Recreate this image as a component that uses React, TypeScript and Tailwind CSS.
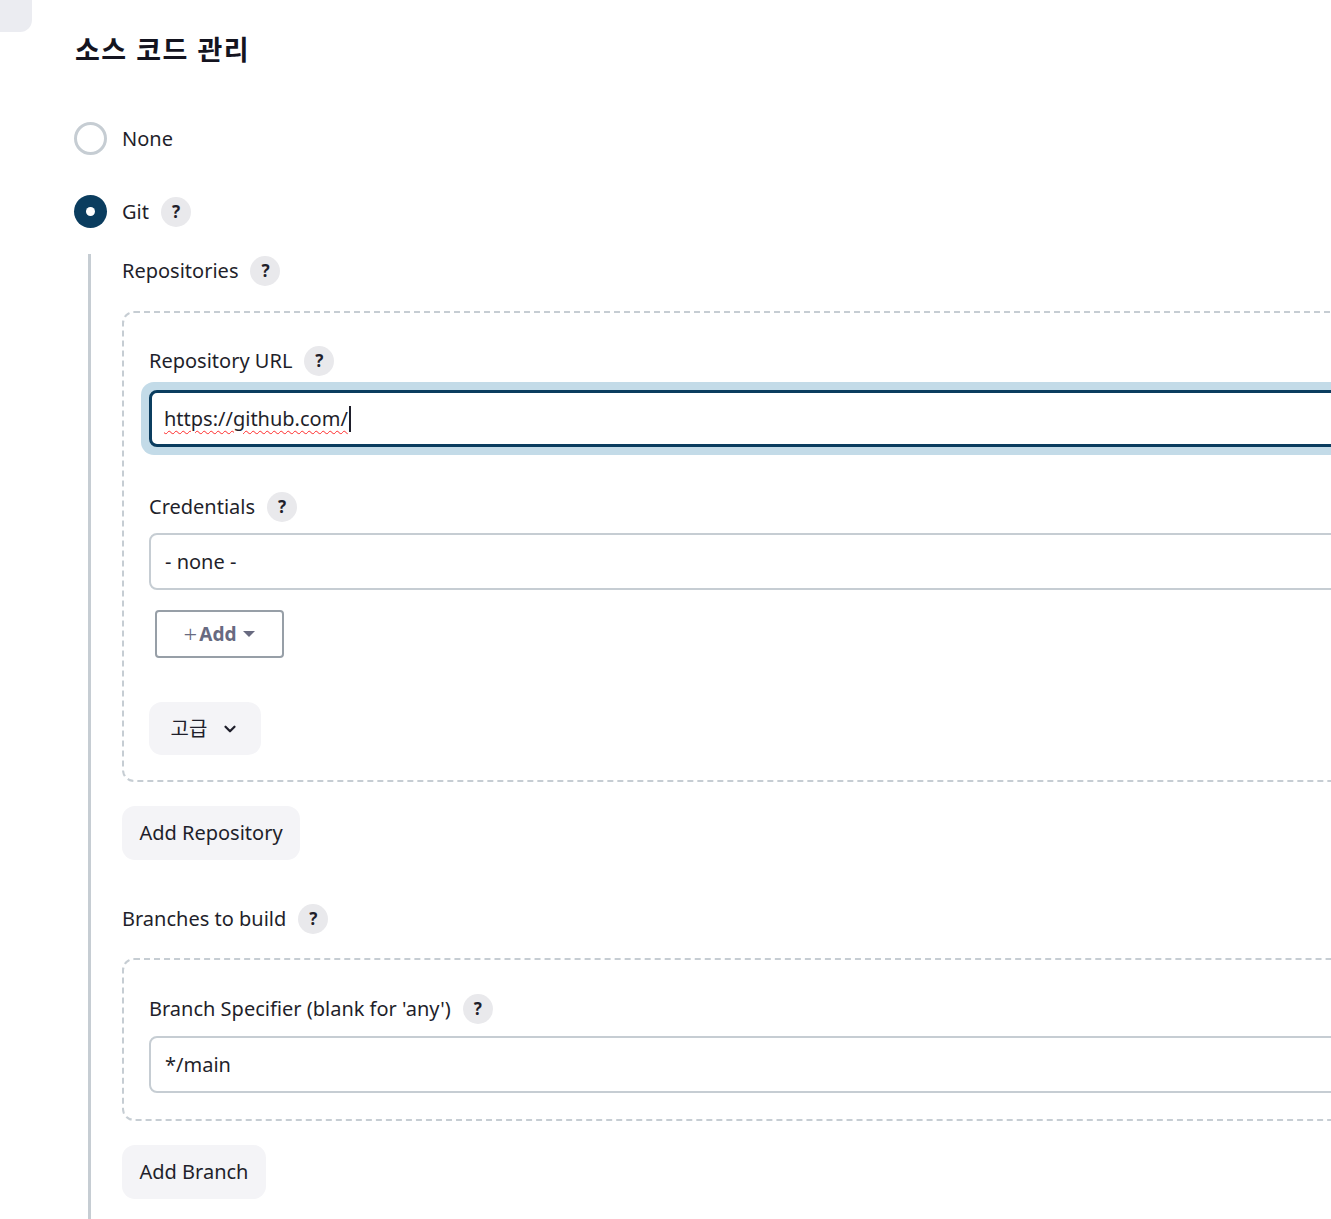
import React from "react";

const font = { fontFamily: '"Noto Sans", "Noto Sans CJK KR", sans-serif' };

function Help() {
  return (
    <span className="ml-3 inline-flex h-[30px] w-[30px] items-center justify-center rounded-full bg-[#e9e9ec] text-[17px] font-bold text-[#1f1f2b]">
      ?
    </span>
  );
}

function Label({ children, help = true }: { children: React.ReactNode; help?: boolean }) {
  return (
    <div className="flex h-[32px] items-center text-[20px] text-[#1f1f2b]">
      <span>{children}</span>
      {help && <Help />}
    </div>
  );
}

export default function App() {
  return (
    <div className="relative h-[1219px] w-[1331px] overflow-hidden bg-white" style={font}>
      <div className="h-[32px] w-[32px] rounded-br-[12px] bg-[#ebecf1]" />
      <div className="w-[1500px] pl-[75px]">
        <h1 className="mt-[1px] text-[27px] font-bold leading-[34px] tracking-[1.5px] text-[#14141f]">소스 코드 관리</h1>

        <div className="ml-[-1px] mt-[55px] flex items-center">
          <span className="h-[33px] w-[33px] rounded-full border-[3px] border-[#c6cdd3] bg-white" />
          <span className="ml-[15px] text-[20px] text-[#1f1f2b]">None</span>
        </div>

        <div className="ml-[-1px] mt-[40px] flex items-center">
          <span className="flex h-[33px] w-[33px] items-center justify-center rounded-full bg-[#0b3d5f]">
            <span className="h-[9px] w-[9px] rounded-full bg-white" />
          </span>
          <span className="ml-[15px] text-[20px] text-[#1f1f2b]">Git</span>
          <Help />
        </div>

        <div className="ml-[13px] mt-[26px] border-l-[3px] border-[#c6cdd3] pb-[40px] pl-[31px]">
          <div className="pt-[1px]">
            <Label>Repositories</Label>
          </div>

          <div className="mt-[24px] rounded-[12px] border-2 border-dashed border-[#c6cdd3] px-[25px] pb-[25px] pt-[32px]">
            <Label>Repository URL</Label>
            <div className="ml-[-8px] mt-[5px] rounded-[13px] bg-[#c3dbe8] p-[8px]">
              <div className="flex h-[57px] items-center rounded-[8px] border-[3px] border-[#0b3d5f] bg-white pl-[12px] text-[20px] text-[#1f1f2b]">
                <span className="underline decoration-[#ff2a2a] decoration-wavy decoration-1 underline-offset-[4px]">https://github.com/</span>
                <span className="ml-[1px] h-[26px] w-[2px] bg-[#1f1f2b]" />
              </div>
            </div>

            <div className="mt-[36px]">
              <Label>Credentials</Label>
            </div>
            <div className="mt-[10px] flex h-[57px] items-center rounded-[8px] border-2 border-[#c6cdd3] bg-white pl-[14px] text-[20px] text-[#1f1f2b]">
              - none -
            </div>

            <div className="ml-[6px] mt-[20px] flex h-[48px] w-[129px] items-center justify-center rounded-[4px] border-2 border-[#979fa7] text-[#686a80]">
              <span className="text-[24px] font-light leading-none">+</span>
              <span className="ml-[2px] text-[19px] font-bold">Add</span>
              <svg className="ml-[7px]" width="12" height="7" viewBox="0 0 12 7">
                <path d="M0 0 L12 0 L6 6 Z" fill="#686a80" />
              </svg>
            </div>

            <div className="mt-[44px] flex h-[53px] w-[112px] items-center justify-center rounded-[13px] bg-[#f4f4f7] text-[20px] text-[#1f1f2b]">
              <span>고급</span>
              <svg className="ml-[14px]" width="18" height="18" viewBox="0 0 24 24" fill="none" stroke="#1f1f2b" strokeWidth="3" strokeLinecap="round" strokeLinejoin="round">
                <path d="M6 9 L12 15 L18 9" />
              </svg>
            </div>
          </div>

          <div className="mt-[24px] flex h-[54px] w-[178px] items-center justify-center rounded-[13px] bg-[#f4f4f7] text-[20px] text-[#1f1f2b]">
            Add Repository
          </div>

          <div className="mt-[43px]">
            <Label>Branches to build</Label>
          </div>

          <div className="mt-[23px] rounded-[12px] border-2 border-dashed border-[#c6cdd3] px-[25px] pb-[26px] pt-[33px]">
            <Label>Branch Specifier (blank for 'any')</Label>
            <div className="mt-[11px] flex h-[57px] items-center rounded-[8px] border-2 border-[#c6cdd3] bg-white pl-[14px] text-[20px] text-[#1f1f2b]">
              */main
            </div>
          </div>

          <div className="mt-[24px] flex h-[54px] w-[144px] items-center justify-center rounded-[13px] bg-[#f4f4f7] text-[20px] text-[#1f1f2b]">
            Add Branch
          </div>
        </div>
      </div>
    </div>
  );
}
